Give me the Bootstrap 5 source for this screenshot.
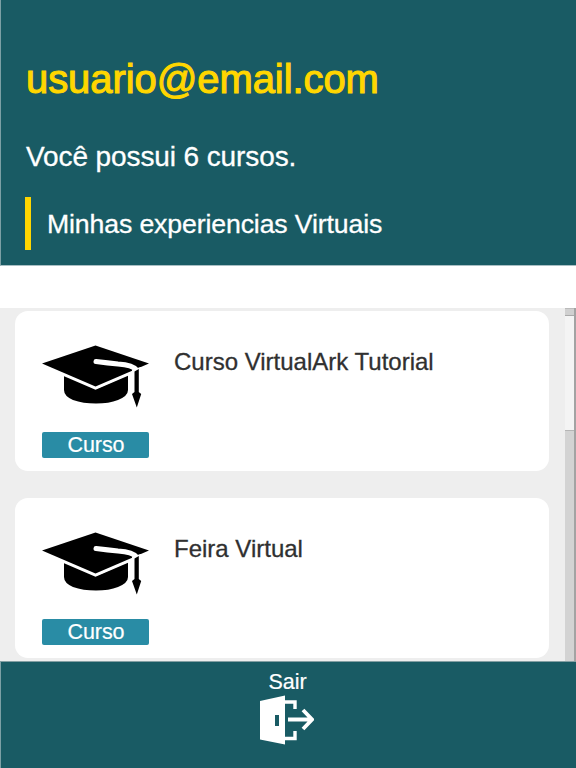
<!DOCTYPE html>
<html lang="pt-BR">
<head>
<meta charset="utf-8">
<meta name="viewport" content="width=device-width, initial-scale=1">
<title>Minhas experiencias Virtuais</title>
<link href="https://cdn.jsdelivr.net/npm/bootstrap@5.3.0/dist/css/bootstrap.min.css" rel="stylesheet">
<style>
body{font-family:"Liberation Sans",Arial,sans-serif;color:#303030;height:768px;background:#fff}
.teal{background:#195b64;border-left:1px solid #7ca0a5}
.top-area{height:266px;padding:56px 24px 0;border-bottom:1px solid #a9bfc4}
.user-mail{font-size:40px;line-height:46px;color:#ffd600;padding-left:1px;letter-spacing:-.07px;-webkit-text-stroke:1.1px #ffd600}
.summary-line{font-size:28px;line-height:32px;margin-top:39px;padding-left:1px;letter-spacing:-.1px;-webkit-text-stroke:.3px #fff}
.section-name{height:53px;margin-top:24px;border-left:6px solid #ffd600;padding-left:16px;font-size:26.67px;letter-spacing:-.13px;-webkit-text-stroke:.3px #fff}
.list-area{height:353px;margin-top:42px;background:#eee;padding:3px 0 0 15px}
.course-list{gap:27px;width:534px}
.course{height:160px;border-radius:13px;padding:34px 27px 0}
.course-media{width:107px}
.cap-icon{width:107px;height:64px}
.tag{height:26px;margin-top:23px;background:#298ca5;border-radius:2px;font-size:21.5px;line-height:27px;padding-left:1px;letter-spacing:-.1px;-webkit-text-stroke:.2px #fff}
.course-name{font-size:24px;line-height:28px;margin:3px 0 0 25px;-webkit-text-stroke:.3px #303030}
.track{width:11px;margin-top:-3px;background:#d3d3d3;border-right:2px solid #a3a3a3}
.track-cap{height:8px;background:#d0d0d0;border-top:1px solid #bbb;border-bottom:1px solid #aaa}
.thumb{height:115px;background:#f4f4f4;border-bottom:1px solid #b5b5b5}
.bottom-area{height:107px;border-top:1px solid #849fa3;padding:8px 2px 0 0}
.exit-text{font-size:21.5px;line-height:25px;-webkit-text-stroke:.2px #fff}
.exit-icon{width:54px;height:50px;margin:0 2px 0 0}
</style>
</head>
<body class="d-flex flex-column overflow-hidden">
<svg class="d-none" xmlns="http://www.w3.org/2000/svg">
<symbol id="cap" viewBox="0 0 107 64">
<path d="M22 30V45Q22 51 31 55Q41 58.5 54 58.5Q67 58.5 76 55Q86 51 86 45V30L54 44Z"/>
<path d="M0 18.5 53.5 0 107 18.5 53.5 41.5Z" stroke="#fff" stroke-width="6" stroke-linejoin="miter"/>
<path d="M0 18.5 53.5 0.5 107 18.5 53.5 41.5Z"/>
<path d="M54 16.5 Q66 18 76 19Q91 20 94.5 25" fill="none" stroke="#fff" stroke-width="5" stroke-linecap="round"/>
<path d="M90 24.5V48H99V22Z" fill="#fff"/>
<path d="M92.5 26.5 96.8 24V47L99.2 49 94.8 62.5 90 49 92.5 47Z"/>
</symbol>
</svg>
<header class="teal top-area text-white flex-shrink-0">
<h1 class="user-mail fw-normal mb-0">usuario@email.com</h1>
<p class="summary-line mb-0">Você possui 6 cursos.</p>
<h2 class="section-name d-flex align-items-center fw-normal mb-0">Minhas experiencias Virtuais</h2>
</header>
<main class="list-area d-flex justify-content-between overflow-hidden flex-shrink-0">
<div class="course-list d-flex flex-column">
<article class="course bg-white d-flex flex-shrink-0">
<div class="course-media"><svg class="cap-icon d-block" aria-hidden="true"><use href="#cap"/></svg><div class="tag text-white text-center">Curso</div></div>
<h3 class="course-name fw-normal">Curso VirtualArk Tutorial</h3>
</article>
<article class="course bg-white d-flex flex-shrink-0">
<div class="course-media"><svg class="cap-icon d-block" aria-hidden="true"><use href="#cap"/></svg><div class="tag text-white text-center">Curso</div></div>
<h3 class="course-name fw-normal">Feira Virtual</h3>
</article>
</div>
<div class="track"><div class="track-cap"></div><div class="thumb"></div></div>
</main>
<footer class="teal bottom-area text-white d-flex flex-column align-items-center flex-shrink-0">
<span class="exit-text">Sair</span>
<svg class="exit-icon" viewBox="0 0 54 50" aria-hidden="true">
<path d="M0 6 25 .5V49.5L0 44.5Z" fill="#fff"/>
<path d="M15 20h4v11h-4z" fill="#195b64"/>
<path d="M25 7H35V14M35 36V43.5H25" fill="none" stroke="#fff" stroke-width="3.4"/>
<path d="M28 24.5H51M43 15 52 24.5 43 34" fill="none" stroke="#fff" stroke-width="3.8"/>
</svg>
</footer>
<script src="https://cdn.jsdelivr.net/npm/bootstrap@5.3.0/dist/js/bootstrap.bundle.min.js"></script>
</body>
</html>
